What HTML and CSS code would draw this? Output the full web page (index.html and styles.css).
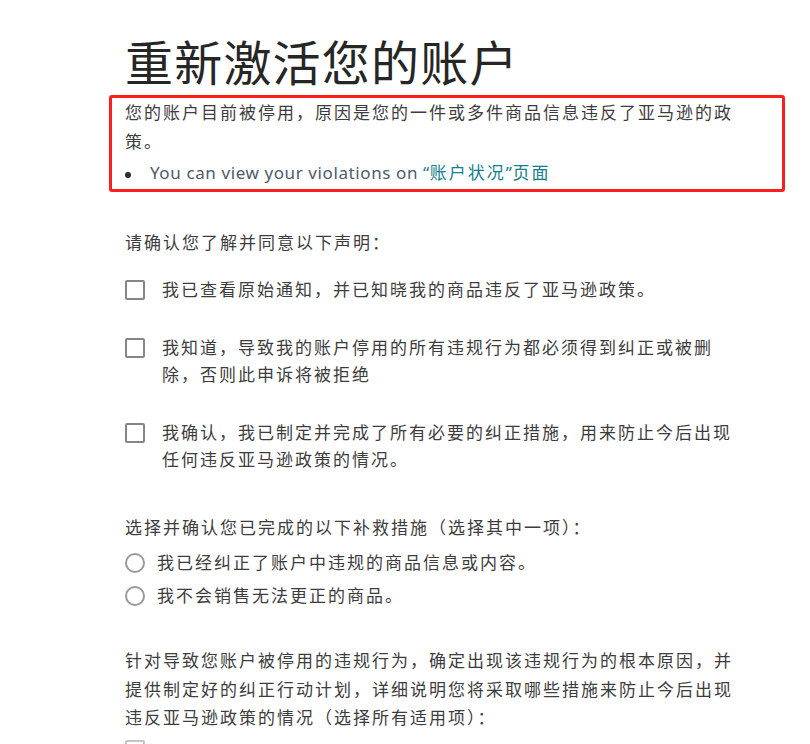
FILE: index.html
```html
<!DOCTYPE html>
<html lang="zh-CN">
<head>
<meta charset="utf-8">
<title>重新激活您的账户</title>
<link rel="stylesheet" href="styles.css">
</head>
<body>
<main class="page">
  <h1 class="title">重新激活您的账户</h1>
  <section class="notice">
    <p class="notice-text">您的账户目前被停用，原因是您的一件或多件商品信息违反了亚马逊的政策。</p>
    <div class="bullet">
      <span class="dot"></span>
      <span class="bullet-text"><span class="en">You can view your violations on </span><a class="link" href="#"><span class="en">“</span>账户状况<span class="en">”</span>页面</a></span>
    </div>
  </section>

  <p class="intro">请确认您了解并同意以下声明：</p>

  <div class="checks">
    <label class="check-row"><span class="box"></span><span class="check-text">我已查看原始通知，并已知晓我的商品违反了亚马逊政策。</span></label>
    <label class="check-row"><span class="box"></span><span class="check-text">我知道，导致我的账户停用的所有违规行为都必须得到纠正或被删除，否则此申诉将被拒绝</span></label>
    <label class="check-row"><span class="box"></span><span class="check-text">我确认，我已制定并完成了所有必要的纠正措施，用来防止今后出现任何违反亚马逊政策的情况。</span></label>
  </div>

  <p class="section-title">选择并确认您已完成的以下补救措施（选择其中一项）：</p>
  <div class="radios">
    <label class="radio-row"><span class="circle"></span><span>我已经纠正了账户中违规的商品信息或内容。</span></label>
    <label class="radio-row"><span class="circle"></span><span>我不会销售无法更正的商品。</span></label>
  </div>

  <p class="para">针对导致您账户被停用的违规行为，确定出现该违规行为的根本原因，并提供制定好的纠正行动计划，详细说明您将采取哪些措施来防止今后出现违反亚马逊政策的情况（选择所有适用项）：</p>
  <div class="next-check"><span class="box"></span></div>
</main>
</body>
</html>
```

FILE: styles.css
```css
html, body {
  margin: 0;
  padding: 0;
  background: #ffffff;
  overflow: hidden;
}

body {
  font-family: "Noto Sans", "Noto Sans CJK SC", sans-serif;
  font-size: 17px;
  letter-spacing: 2px;
  color: #3d3d3d;
}

.page {
  width: 620px;
  padding: 35px 0 0 125px;
}

.title {
  margin: 0;
  font-size: 48px;
  line-height: 56px;
  font-weight: 400;
  letter-spacing: 1.2px;
  color: #262626;
}

.notice {
  margin: 4px 0 0 -16px;
  width: 626px;
  padding: 0 31px 2px 13px;
  border: 3px solid #fc1d1d;
  border-radius: 3px;
  line-height: 29px;
}

.notice-text {
  margin: 0;
}

.bullet {
  display: flex;
  align-items: center;
  margin-top: 2px;
}

.dot {
  flex: none;
  width: 6px;
  height: 6px;
  border-radius: 50%;
  background: #2b2b2b;
  margin: 5px 19px 0 0;
}

.bullet-text {
  color: #4e5a6c;
}

.en {
  letter-spacing: 0.6px;
}

.link {
  color: #16808f;
  text-decoration: none;
}

.intro {
  margin: 37px 0 0;
  line-height: 28px;
}

.checks {
  display: flex;
  flex-direction: column;
  gap: 31px;
  margin-top: 19px;
}

.check-row {
  display: flex;
  align-items: flex-start;
  line-height: 27px;
}

.box {
  flex: none;
  box-sizing: border-box;
  width: 20px;
  height: 20px;
  border: 2px solid #868686;
  border-radius: 2px;
  margin-top: 4px;
  margin-right: 17px;
}

.section-title {
  margin: 41px 0 0;
  line-height: 28px;
}

.radios {
  display: flex;
  flex-direction: column;
  gap: 5px;
  margin-top: 7px;
}

.radio-row {
  display: flex;
  align-items: center;
  line-height: 28px;
}

.circle {
  flex: none;
  box-sizing: border-box;
  width: 20px;
  height: 20px;
  border: 2px solid #9a9a9a;
  border-radius: 50%;
  margin-right: 12px;
}

.para {
  margin: 37px 0 0;
  line-height: 28.5px;
}

.next-check {
  margin-top: 7px;
}

.next-check .box {
  display: block;
  margin: 0;
  border-color: #c4c4c4;
}
```
